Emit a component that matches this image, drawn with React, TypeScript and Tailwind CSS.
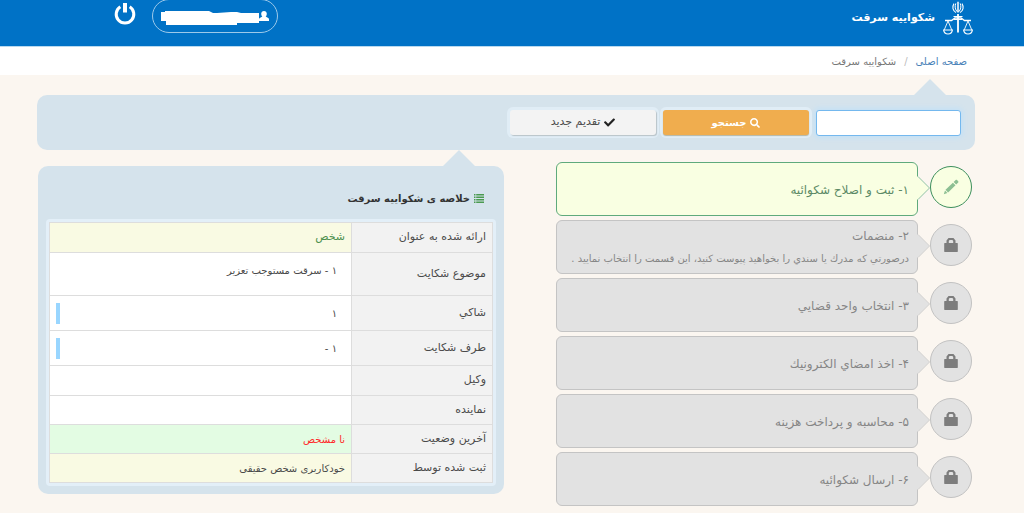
import React from 'react';
import { FaCheck, FaSearch } from 'react-icons/fa';

interface Step {
  id: number;
  title: string;
  description?: string;
  active?: boolean;
}

interface SummaryRow {
  label: string;
  value: string;
  rowClass: string;
  cellClass: string;
  marked?: boolean;
}

const steps: Step[] = [
  { id: 1, title: '۱- ثبت و اصلاح شکوائیه', active: true },
  {
    id: 2,
    title: '۲- منضمات',
    description: 'درصورتي كه مدرك يا سندي را بخواهيد پيوست كنيد، اين قسمت را انتخاب نماييد .',
  },
  { id: 3, title: '۳- انتخاب واحد قضايي' },
  { id: 4, title: '۴- اخذ امضاي الكترونيك' },
  { id: 5, title: '۵- محاسبه و پرداخت هزینه' },
  { id: 6, title: '۶- ارسال شکوائیه' },
];

const summaryRows: SummaryRow[] = [
  { label: 'ارائه شده به عنوان', value: 'شخص', rowClass: 'h-[30px]', cellClass: 'bg-[#f9fae3] text-[11px] text-[#4d8f4d]' },
  { label: 'موضوع شکایت', value: '۱ - سرقت مستوجب تعزیر', rowClass: 'h-[43px]', cellClass: 'bg-white pr-[14px] pb-2 text-[10px]' },
  { label: 'شاكي', value: '۱', rowClass: 'h-[35px]', cellClass: 'bg-white pr-[14px] text-[10px]', marked: true },
  { label: 'طرف شکایت', value: '۱ -', rowClass: 'h-[35px]', cellClass: 'bg-white pr-[14px] text-[10px]', marked: true },
  { label: 'وکیل', value: '', rowClass: 'h-[30px]', cellClass: 'bg-white text-[10px]' },
  { label: 'نماینده', value: '', rowClass: 'h-[29px]', cellClass: 'bg-white text-[10px]' },
  { label: 'آخرین وضعیت', value: 'نا مشخص', rowClass: 'h-[29px]', cellClass: 'bg-[#e3fce3] text-[10px] text-[#ff2a2a]' },
  { label: 'ثبت شده توسط', value: 'خودکاربری شخص حقیقی', rowClass: 'h-[29px]', cellClass: 'bg-[#f9fae3] text-[10px]' },
];

const JusticeLogo: React.FC = () => (
  <svg viewBox="0 0 30 34" className="h-[34px] w-[30px]" fill="none" stroke="white" aria-hidden="true">
    <path d="M15 0.800V11.500" strokeWidth="1.500" />
    <path d="M12.800 2.400C11.600 5.500 12 8.500 14.300 10.800M17.200 2.400c1.200 3.100 0.800 6.100-1.500 8.400" strokeWidth="1" />
    <path d="M11 2.600C8.800 6 9.800 9.800 13 11.600M19 2.600c2.200 3.400 1.200 7.200-2 9" strokeWidth="1.100" />
    <path d="M15 13v18.500" strokeWidth="1.800" />
    <path d="M2 19.500h6.500L12 17h6l3.500 2.500H28" strokeWidth="1.300" />
    <path d="M10.500 15.500h9M11 18.500h8" strokeWidth="1.200" />
    <path d="M5 20L1.200 29M5 20L8.800 29M25 20L21.200 29M25 20L28.800 29" strokeWidth="0.900" />
    <path d="M0.600 29h8.800c-0.400 2.600-2.200 4-4.400 4s-4-1.400-4.400-4zM20.600 29h8.800c-0.400 2.600-2.200 4-4.400 4s-4-1.400-4.400-4z" strokeWidth="1.200" />
  </svg>
);

const PowerIcon: React.FC = () => (
  <svg viewBox="0 0 22 22" className="h-[22px] w-[22px]" fill="none" stroke="white" strokeWidth="3" aria-hidden="true">
    <path d="M6.300 3.800A8.800 8.800 0 1 0 15.700 3.800" />
    <path d="M11 0v9.500" strokeWidth="4" />
  </svg>
);

const UserIcon: React.FC = () => (
  <svg viewBox="0 0 10 10" className="h-[10px] w-[10px]" fill="white" aria-hidden="true">
    <path d="M5 0c1.700 0 2.800 1.200 2.800 2.800 0 1.200-.5 2.200-1.100 2.800L9.200 7c.6.300.8.800.8 1.400V10H0V8.400C0 7.800.2 7.300.8 7l2.500-1.400C2.700 5 2.200 4 2.200 2.800 2.200 1.200 3.300 0 5 0z" />
  </svg>
);

const LockIcon: React.FC = () => (
  <svg viewBox="0 0 14 16" className="h-4 w-[14px]" fill="currentColor" aria-hidden="true">
    <path d="M2.500 6V3.500L4.500 1h5l2 2.500V6h1.800c.3 0 .5.200.5.500v8c0 .3-.2.500-.5.500H.7c-.3 0-.5-.2-.5-.5v-8C.2 6.200.4 6 .7 6zM4.800 6h4.400V4L8.400 3H5.600L4.800 4z" />
  </svg>
);

const PencilIcon: React.FC = () => (
  <svg viewBox="0 0 16 16" className="h-4 w-4" fill="currentColor" aria-hidden="true">
    <path d="M.8 15.200l1.200-3.600 2.400 2.400zM2.500 10.800L9.900 3.700l2.600 2.600-7.400 7.200zM10.600 3L12.700 1.100c.4-.4.900-.4 1.300 0l1.200 1.100c.4.400.4.900 0 1.300L13.200 5.600z" />
  </svg>
);

const ListIcon: React.FC = () => (
  <svg viewBox="0 0 10 9" className="h-[9px] w-[10px]" fill="#4b9a50" aria-hidden="true">
    <path d="M0 0h1.500v1.500H0zM2.200 0H10v1.500H2.200zM0 2.500h1.500V4H0zM2.200 2.500H10V4H2.200zM0 5h1.500v1.500H0zM2.200 5H10v1.500H2.200zM0 7.500h1.500V9H0zM2.200 7.500H10V9H2.200z" />
  </svg>
);

// Small arrow that sits on top of a panel
const PanelArrow: React.FC = () => (
  <svg viewBox="0 0 34 17" className="absolute -top-4 right-7 h-[17px] w-[34px]" fill="#d5e3ec" aria-hidden="true">
    <path d="M17 0L34 17H0z" />
  </svg>
);

const StepItem: React.FC<{ step: Step }> = ({ step }) => (
  <li
    className={
      step.active
        ? 'flex items-center gap-3 text-[#5c8a66]'
        : 'flex items-center gap-3 text-[#868686]'
    }
  >
    <span
      className={
        step.active
          ? 'mb-1 flex h-[42px] w-[42px] shrink-0 items-center justify-center rounded-full border border-[#3d8f5d] bg-[#f9ffe2] text-[#8cbf93]'
          : 'mb-1 flex h-[42px] w-[42px] shrink-0 items-center justify-center rounded-full border border-[#c2c2c2] bg-[#e2e2e2] text-[#7d7d7d]'
      }
    >
      {step.active ? <PencilIcon /> : <LockIcon />}
    </span>
    <button
      type="button"
      className={
        step.active
          ? 'relative flex h-[54px] grow flex-col justify-center gap-[3px] rounded-md border border-[#5faa7c] bg-[#f9ffe2] px-2 pt-px text-right'
          : 'relative flex h-[54px] grow flex-col justify-center gap-[3px] rounded-md border border-[#c4c4c4] bg-[#e2e2e2] px-2 pt-px text-right'
      }
    >
      <svg
        viewBox="0 0 13 24"
        className="absolute top-[13px] -right-[13px] h-6 w-[13px]"
        fill={step.active ? '#f9ffe2' : '#e2e2e2'}
        aria-hidden="true"
      >
        <path d="M0 0L12 12L0 24z" />
        <path d="M1 0.500L12.500 12L1 23.500" fill="none" stroke={step.active ? '#8fc3a2' : '#cacaca'} />
      </svg>
      <span className="text-xs leading-5">{step.title}</span>
      {step.description && <span className="text-[10px] leading-5 whitespace-nowrap">{step.description}</span>}
    </button>
  </li>
);

const App: React.FC = () => {
  return (
    <div
      dir="rtl"
      className="min-h-screen bg-[#fbf6f0] font-['DejaVu_Sans',sans-serif] text-[11px] text-[#4a4a4a]"
    >
      {/* Header */}
      <header className="flex h-[47px] items-start justify-between border-b border-[#b9d9ef] bg-[#0072c6] pr-[51px] pl-[114px]">
        <div className="flex items-center gap-2 pt-px">
          <JusticeLogo />
          <h1 className="text-[11px] font-bold text-white">شکواییه سرقت</h1>
        </div>
        <div className="flex items-start gap-4">
          <button
            type="button"
            aria-label="حساب کاربری"
            className="-mt-px flex h-[34px] w-[126px] items-start justify-end rounded-full border border-[#9cc9ea] px-2 pt-[11px]"
            dir="ltr"
          >
            <svg viewBox="0 0 98 15" className="h-[15px] w-[98px]" fill="white" aria-hidden="true">
              <path d="M4 0H48L52 2H56L70 1H76L80 2L98 2V12H76V14H5V10H0V1H4z" />
            </svg>
            <UserIcon />
          </button>
          <button type="button" aria-label="خروج" className="pt-[3px]">
            <PowerIcon />
          </button>
        </div>
      </header>

      {/* Breadcrumb */}
      <nav className="flex h-7 items-center gap-2 bg-white pr-[57px] text-[10px]">
        <a href="#" className="text-[#4a82b8]">صفحه اصلی</a>
        <span className="text-[#bbbbbb]">/</span>
        <span className="text-[#777777]">شکواییه سرقت</span>
      </nav>

      {/* Search */}
      <form
        className="relative mt-5 mr-[49px] ml-[37px] flex h-[55px] items-center gap-[7px] rounded-[10px] bg-[#d5e3ec] pr-[14px]"
        onSubmit={(e) => e.preventDefault()}
      >
        <PanelArrow />
        <input
          type="text"
          aria-label="جستجو"
          className="h-[26px] w-[145px] rounded-[3px] border border-[#74b8ee] bg-white px-2 shadow-[0_0_5px_2px_#c4e1f6] outline-none"
        />
        <button
          type="submit"
          className="flex h-[25px] w-[146px] items-center justify-center gap-1 rounded-[3px] bg-[#f0ad4e] text-[10px] font-bold text-white shadow-[0_1px_1px_#b5b5a5,0_0_0_3px_#e0edf6]"
        >
          <FaSearch />
          جستجو
        </button>
        <button
          type="button"
          className="flex h-[25px] w-[146px] items-center justify-center gap-1 rounded-[3px] bg-[#f3f3f3] text-[11px] shadow-[1px_1px_1px_#b8c2c8,0_0_0_3px_#e0edf6]"
        >
          <FaCheck className="text-[#222222]" />
          تقدیم جدید
        </button>
      </form>

      <main className="mr-[52px] ml-[38px] grid grid-cols-[416fr_466fr] items-start gap-[52px] pt-3">
        {/* Steps */}
        <ol className="flex min-w-0 flex-col gap-1 pb-[7px]">
          {steps.map((step) => (
            <StepItem key={step.id} step={step} />
          ))}
        </ol>

        {/* Summary */}
        <section className="relative mt-1 min-w-0 rounded-[10px] bg-[#d5e3ec] px-2 pb-2">
          <PanelArrow />
          <h2 className="flex h-[53px] items-center gap-1 pt-3 pr-3 text-[10px] font-bold text-[#333333]">
            <ListIcon />
            خلاصه ی شکواییه سرقت
          </h2>
          <div className="rounded bg-[#e3eff8] p-[3px]">
            <table className="w-full table-fixed border-collapse">
              <tbody>
                {summaryRows.map((row) => (
                  <tr key={row.label} className={row.rowClass}>
                    <th
                      scope="row"
                      className="w-[141px] border border-[#dddddd] bg-[#f2f2f2] px-[6px] text-right font-normal"
                    >
                      {row.label}
                    </th>
                    <td className={`border border-[#dddddd] px-[6px] ${row.cellClass}`}>
                      <div className="flex items-center justify-between">
                        <span>{row.value}</span>
                        {row.marked && <span className="h-[21px] w-1 bg-[#99d6ff]" />}
                      </div>
                    </td>
                  </tr>
                ))}
              </tbody>
            </table>
          </div>
        </section>
      </main>
    </div>
  );
};

export default App;
